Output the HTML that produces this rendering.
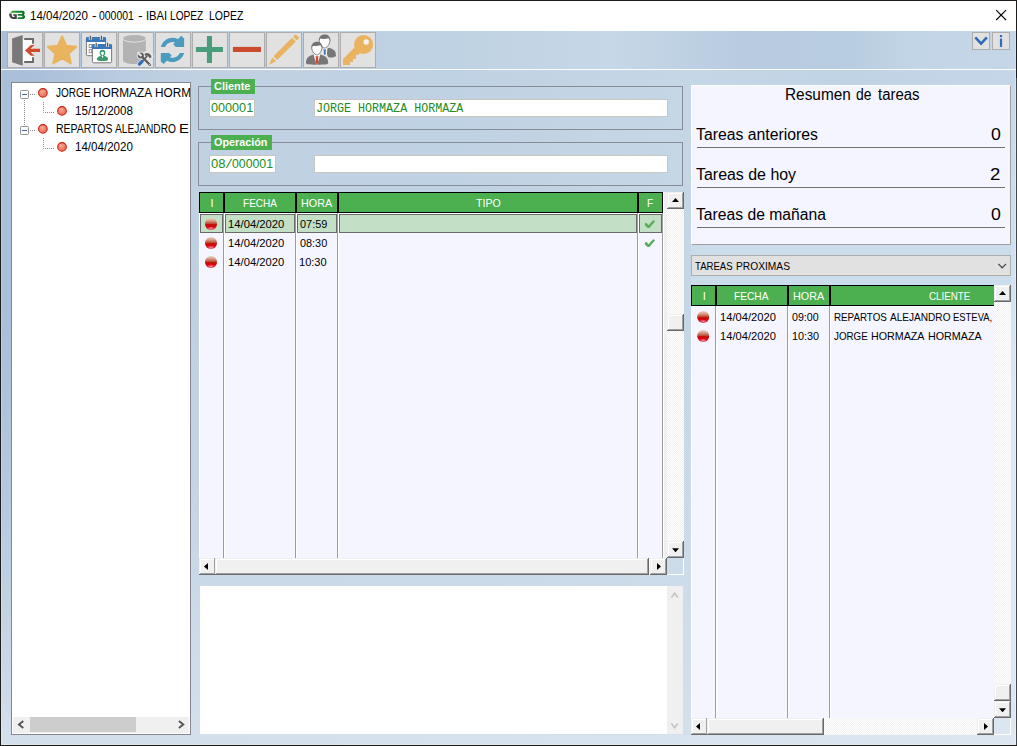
<!DOCTYPE html>
<html lang="es"><head><meta charset="utf-8"><title>14/04/2020 - 000001 - IBAI LOPEZ LOPEZ</title>
<style>
html,body{margin:0;padding:0}
body{width:1017px;height:746px;overflow:hidden;background:#1e1c18;position:relative;font-family:"Liberation Sans",sans-serif;font-size:11px}
div,span,svg{position:absolute;box-sizing:border-box}
.t{white-space:pre;transform-origin:0 0;display:block}
#bg{left:1px;top:1px;width:1015px;height:744px;
 background:
  linear-gradient(to bottom,rgba(212,225,237,0) 0,rgba(212,225,237,0) 300px,rgba(212,225,237,.1) 385px,rgba(212,225,237,.29) 500px,rgba(212,225,237,.62) 620px,rgba(212,225,237,.82) 695px,rgba(212,225,237,1) 744px),
  linear-gradient(to right,#a9bed9 0,#abc0da 40px,#b9cce0 120px,#c0d1e2 200px,#bfd2e3 450px,#c3d4e4 570px,#c5d7e6 690px,#c0d3e5 850px,#c5d6e8 1015px);}
#tbbg{left:1px;top:31px;width:1015px;height:38px;background:linear-gradient(to right,#a9bed9 0,#abc0da 40px,#b9cce0 120px,#bdd0e2 200px,#bfd2e3 450px,#c6d8e7 610px,#b8cbe0 740px,#b9cde1 850px,#c2d5e6 910px,#c5d6e8 1015px)}
#rgap{left:691px;top:245px;width:320px;height:40px;background:#cbdcea}
#bstrip{left:1px;top:735px;width:1015px;height:10px;background:linear-gradient(to right,#d3e0ec 0,#d3e0ec 200px,#dce6f1 100%)}
#bgedge{left:1px;top:31px;width:1015px;height:714px;border:1px solid rgba(255,255,255,.22);border-top:none}
#rstrip{left:1011px;top:70px;width:5px;height:675px;background:linear-gradient(to bottom,#c5d6e8 0,#dde7f2 330px,#dde7f2 100%)}
#rstrip2{left:1015px;top:70px;width:1px;height:675px;background:rgba(255,255,255,.35)}
#title{left:1px;top:1px;width:1015px;height:30px;background:#fff}
#tbline{left:1px;top:69px;width:1015px;height:1px;background:#fff}
.tb{width:36px;height:36px;top:32px;background:#e1e1e1;border:1px solid #adadad}
.sb{width:18px;height:18px;top:32px;background:#e1e1e1;border:1px solid #adadad}
#tree{left:11px;top:82px;width:180px;height:653px;background:#fff;border:1px solid #828790;overflow:hidden}
.fs{left:198px;width:485px;height:44px;border:1px solid #868c98}
.lg{background:#4caf50;height:15px;left:211px}
.in{background:#fff;border:1px solid #c9c6c0;height:18px}
.lav{background:#f5f5ff}
.hd{background:#4caf50;border:1px solid #000;height:21px}
.cl{width:1px;background:#9c9c9c}
.cw{width:1px;background:#fff}
.sel{background:#c3dfc5;border:1px solid #6a6a6a;height:19px;top:214px}
.b3{background:#f0f0f0;box-shadow:inset -1px -1px 0 #696969,inset 1px 1px 0 #f0f0f0,inset -2px -2px 0 #a0a0a0,inset 2px 2px 0 #fff}
.trk{background:repeating-conic-gradient(#ffffff 0 25%,#f0f0f0 0 50%) 0 0/2px 2px}
#ov{left:0;top:0;width:1017px;height:746px;pointer-events:none}
</style></head><body>
<div id="bg"></div><div id="tbbg"></div><div id="rgap"></div><div id="bstrip"></div><div id="bgedge"></div><div id="rstrip"></div><div id="rstrip2"></div>
<div style="left:1016px;top:78px;width:1px;height:667px;background:#464646"></div><div id="title"></div><div id="tbline"></div>

<span class="t" style="left:29.83px;top:9.64px;font-size:12px;line-height:12px;font-family:'Liberation Sans',sans-serif;color:#000;transform:scaleX(0.9624);">14/04/2020</span>
<span class="t" style="left:91.62px;top:9.64px;font-size:12px;line-height:12px;font-family:'Liberation Sans',sans-serif;color:#000;transform:scaleX(1.1448);">-</span>
<span class="t" style="left:99.31px;top:9.64px;font-size:12px;line-height:12px;font-family:'Liberation Sans',sans-serif;color:#000;transform:scaleX(0.8692);">000001</span>
<span class="t" style="left:138.22px;top:9.64px;font-size:12px;line-height:12px;font-family:'Liberation Sans',sans-serif;color:#000;transform:scaleX(1.1448);">-</span>
<span class="t" style="left:146.19px;top:9.64px;font-size:12px;line-height:12px;font-family:'Liberation Sans',sans-serif;color:#000;transform:scaleX(0.9357);">IBAI</span>
<span class="t" style="left:170.09px;top:9.64px;font-size:12px;line-height:12px;font-family:'Liberation Sans',sans-serif;color:#000;transform:scaleX(0.8445);">LOPEZ</span>
<span class="t" style="left:208.56px;top:9.64px;font-size:12px;line-height:12px;font-family:'Liberation Sans',sans-serif;color:#000;transform:scaleX(0.8735);">LOPEZ</span>
<div class="tb" style="left:7px"></div>
<div class="tb" style="left:44px"></div>
<div class="tb" style="left:81px"></div>
<div class="tb" style="left:118px"></div>
<div class="tb" style="left:155px"></div>
<div class="tb" style="left:192px"></div>
<div class="tb" style="left:229px"></div>
<div class="tb" style="left:266px"></div>
<div class="tb" style="left:303px"></div>
<div class="tb" style="left:340px"></div>
<div class="sb" style="left:972px"></div><div class="sb" style="left:992px"></div>
<div id="tree"><div style="left:0;top:0;width:177.5px;height:200px;overflow:hidden">
<span class="t" style="left:43.75px;top:3.64px;font-size:12px;line-height:12px;font-family:'Liberation Sans',sans-serif;color:#000;transform:scaleX(0.8315);">JORGE</span>
<span class="t" style="left:80.65px;top:3.64px;font-size:12px;line-height:12px;font-family:'Liberation Sans',sans-serif;color:#000;transform:scaleX(0.9846);">HORMAZA</span>
<span class="t" style="left:142.55px;top:3.64px;font-size:12px;line-height:12px;font-family:'Liberation Sans',sans-serif;color:#000;transform:scaleX(0.9846);">HORMAZA</span>
<span class="t" style="left:63.33px;top:21.74px;font-size:12px;line-height:12px;font-family:'Liberation Sans',sans-serif;color:#000;transform:scaleX(0.9646);">15/12/2008</span>
<span class="t" style="left:43.96px;top:39.54px;font-size:12px;line-height:12px;font-family:'Liberation Sans',sans-serif;color:#000;transform:scaleX(0.8717);">REPARTOS</span>
<span class="t" style="left:103.40px;top:39.54px;font-size:12px;line-height:12px;font-family:'Liberation Sans',sans-serif;color:#000;transform:scaleX(0.8456);">ALEJANDRO</span>
<span class="t" style="left:166.81px;top:39.54px;font-size:12px;line-height:12px;font-family:'Liberation Sans',sans-serif;color:#000;transform:scaleX(1.2385);">ESTEVA,</span>
<span class="t" style="left:63.33px;top:57.64px;font-size:12px;line-height:12px;font-family:'Liberation Sans',sans-serif;color:#000;transform:scaleX(0.9641);">14/04/2020</span>
</div>
<div style="left:1px;top:634px;width:176px;height:16px;background:#f0f0f0"></div>
<div style="left:18px;top:634px;width:106px;height:15px;background:#cdcdcd"></div>
</div>
<div class="fs" style="top:86px"></div><div class="fs" style="top:142px"></div>
<div class="lg" style="top:79px;width:44px"></div><div class="lg" style="top:135px;width:61px"></div>
<span class="t" style="left:213.96px;top:81.19px;font-size:11px;line-height:11px;font-family:'Liberation Sans',sans-serif;font-weight:bold;color:#fff;transform:scaleX(0.9927);">Cliente</span>
<span class="t" style="left:213.97px;top:137.09px;font-size:11px;line-height:11px;font-family:'Liberation Sans',sans-serif;font-weight:bold;color:#fff;transform:scaleX(0.9813);">Operación</span>
<div class="in" style="left:209px;top:99px;width:46px"></div>
<div class="in" style="left:314px;top:99px;width:354px"></div>
<div class="in" style="left:209px;top:155px;width:67px"></div>
<div class="in" style="left:314px;top:155px;width:354px"></div>
<span class="t" style="left:210.73px;top:100.56px;font-size:13.4px;line-height:13.4px;font-family:'Liberation Sans',sans-serif;color:#228b22;transform:scaleX(0.9437);">000001</span>
<span class="t" style="left:315.71px;top:101.98px;font-size:13.6px;line-height:13.6px;font-family:'Liberation Mono',monospace;color:#228b22;transform:scaleX(0.8594);">JORGE HORMAZA HORMAZA</span>
<span class="t" style="left:210.81px;top:156.56px;font-size:13.4px;line-height:13.4px;font-family:'Liberation Sans',sans-serif;color:#228b22;transform:scaleX(0.9758);">08</span>
<span class="t" style="left:224.59px;top:157.98px;font-size:13.6px;line-height:13.6px;font-family:'Liberation Mono',monospace;color:#228b22;transform:scaleX(0.9454);">/</span>
<span class="t" style="left:232.34px;top:156.56px;font-size:13.4px;line-height:13.4px;font-family:'Liberation Sans',sans-serif;color:#228b22;transform:scaleX(0.9185);">000001</span>
<div class="lav" style="left:199px;top:192px;width:468px;height:366px"></div>
<div class="cw" style="left:199px;top:213px;height:345px"></div>
<div style="left:199px;top:213px;width:464px;height:1px;background:#fff"></div>
<div class="hd" style="left:199px;top:192px;width:25px"></div>
<div class="cl" style="left:223px;top:213px;height:345px"></div>
<div class="cw" style="left:224px;top:213px;height:345px"></div>
<div class="sel" style="left:200px;width:23px"></div>
<div class="hd" style="left:224px;top:192px;width:72px"></div>
<div class="cl" style="left:295px;top:213px;height:345px"></div>
<div class="cw" style="left:296px;top:213px;height:345px"></div>
<div class="sel" style="left:225px;width:70px"></div>
<div class="hd" style="left:296px;top:192px;width:42px"></div>
<div class="cl" style="left:337px;top:213px;height:345px"></div>
<div class="cw" style="left:338px;top:213px;height:345px"></div>
<div class="sel" style="left:297px;width:40px"></div>
<div class="hd" style="left:338px;top:192px;width:300px"></div>
<div class="cl" style="left:637px;top:213px;height:345px"></div>
<div class="cw" style="left:638px;top:213px;height:345px"></div>
<div class="sel" style="left:339px;width:298px"></div>
<div class="hd" style="left:638px;top:192px;width:25px"></div>
<div class="cl" style="left:662px;top:213px;height:345px"></div>
<div class="sel" style="left:639px;width:23px"></div>
<div style="left:663px;top:192px;width:4px;height:366px;background:#f0f0f0;border-left:1px solid #fff"></div>
<span class="t" style="left:-0.99px;top:197.79px;font-size:11px;line-height:11px;font-family:'Liberation Sans',sans-serif;color:#fff;transform:scaleX(1.0000);left:210.6px;">I</span>
<span class="t" style="left:242.90px;top:197.79px;font-size:11px;line-height:11px;font-family:'Liberation Sans',sans-serif;color:#fff;transform:scaleX(0.9125);">FECHA</span>
<span class="t" style="left:300.63px;top:197.79px;font-size:11px;line-height:11px;font-family:'Liberation Sans',sans-serif;color:#fff;transform:scaleX(0.9844);">HORA</span>
<span class="t" style="left:475.79px;top:197.79px;font-size:11px;line-height:11px;font-family:'Liberation Sans',sans-serif;color:#fff;transform:scaleX(0.9633);">TIPO</span>
<span class="t" style="left:647.19px;top:197.79px;font-size:11px;line-height:11px;font-family:'Liberation Sans',sans-serif;color:#fff;transform:scaleX(0.9229);">F</span>
<span class="t" style="left:228.06px;top:218.69px;font-size:11px;line-height:11px;font-family:'Liberation Sans',sans-serif;color:#000;transform:scaleX(1.0220);">14/04/2020</span>
<span class="t" style="left:299.79px;top:218.69px;font-size:11px;line-height:11px;font-family:'Liberation Sans',sans-serif;color:#000;transform:scaleX(0.9917);">07:59</span>
<span class="t" style="left:228.06px;top:237.69px;font-size:11px;line-height:11px;font-family:'Liberation Sans',sans-serif;color:#000;transform:scaleX(1.0220);">14/04/2020</span>
<span class="t" style="left:299.79px;top:237.69px;font-size:11px;line-height:11px;font-family:'Liberation Sans',sans-serif;color:#000;transform:scaleX(0.9887);">08:30</span>
<span class="t" style="left:228.06px;top:256.69px;font-size:11px;line-height:11px;font-family:'Liberation Sans',sans-serif;color:#000;transform:scaleX(1.0220);">14/04/2020</span>
<span class="t" style="left:299.37px;top:256.69px;font-size:11px;line-height:11px;font-family:'Liberation Sans',sans-serif;color:#000;transform:scaleX(1.0042);">10:30</span>
<div class="trk" style="left:667px;top:192px;width:17px;height:366px"></div>
<div class="b3" style="left:667px;top:192px;width:17px;height:17px"></div>
<div class="b3" style="left:667px;top:314px;width:17px;height:17px"></div>
<div class="b3" style="left:667px;top:541px;width:17px;height:17px"></div>
<div class="trk" style="left:199px;top:558px;width:468px;height:17px"></div>
<div style="left:199px;top:558px;width:16px;height:17px;overflow:hidden"><div class="b3" style="left:0;top:0;width:17px;height:17px"></div><div style="left:15px;top:0;width:1px;height:15px;background:#a0a0a0"></div></div>
<div class="b3" style="left:215px;top:558px;width:434px;height:17px"></div>
<div class="b3" style="left:650px;top:558px;width:17px;height:17px"></div>
<div style="left:667px;top:558px;width:17px;height:17px;border-right:1px solid #fff;border-bottom:1px solid #fff"></div>
<div style="left:200px;top:586px;width:467px;height:148px;background:#fff"></div>
<div style="left:667px;top:586px;width:16px;height:148px;background:#f0f0f0"></div>
<div class="lav" style="left:691px;top:85px;width:320px;height:160px;border-left:1px solid #fff;border-top:1px solid #fff;border-right:1px solid #a0a0a0;border-bottom:1px solid #a0a0a0"></div>
<span class="t" style="left:785.07px;top:86.83px;font-size:15.8px;line-height:15.8px;font-family:'Liberation Sans',sans-serif;color:#000;transform:scaleX(0.9735);">Resumen</span>
<span class="t" style="left:856.44px;top:86.83px;font-size:15.8px;line-height:15.8px;font-family:'Liberation Sans',sans-serif;color:#000;transform:scaleX(0.8808);">de</span>
<span class="t" style="left:878.18px;top:86.83px;font-size:15.8px;line-height:15.8px;font-family:'Liberation Sans',sans-serif;color:#000;transform:scaleX(0.9459);">tareas</span>
<span class="t" style="left:695.88px;top:126.79px;font-size:15.6px;line-height:15.6px;font-family:'Liberation Sans',sans-serif;color:#000;transform:scaleX(1.0126);">Tareas anteriores</span>
<span class="t" style="left:990.64px;top:127.49px;font-size:15.6px;line-height:15.6px;font-family:'Liberation Sans',sans-serif;color:#000;transform:scaleX(1.1351);">0</span>
<div style="left:697px;top:147px;width:308px;height:1px;background:#6e6e6e"></div>
<div style="left:1005px;top:147px;width:5px;height:1px;background:#fff"></div>
<span class="t" style="left:695.88px;top:166.79px;font-size:15.6px;line-height:15.6px;font-family:'Liberation Sans',sans-serif;color:#000;transform:scaleX(1.0215);">Tareas de hoy</span>
<span class="t" style="left:990.37px;top:167.49px;font-size:15.6px;line-height:15.6px;font-family:'Liberation Sans',sans-serif;color:#000;transform:scaleX(1.1910);">2</span>
<div style="left:697px;top:187px;width:308px;height:1px;background:#6e6e6e"></div>
<div style="left:1005px;top:187px;width:5px;height:1px;background:#fff"></div>
<span class="t" style="left:695.89px;top:206.79px;font-size:15.6px;line-height:15.6px;font-family:'Liberation Sans',sans-serif;color:#000;transform:scaleX(1.0059);">Tareas de mañana</span>
<span class="t" style="left:990.64px;top:207.49px;font-size:15.6px;line-height:15.6px;font-family:'Liberation Sans',sans-serif;color:#000;transform:scaleX(1.1351);">0</span>
<div style="left:697px;top:227px;width:308px;height:1px;background:#6e6e6e"></div>
<div style="left:1005px;top:227px;width:5px;height:1px;background:#fff"></div>
<div style="left:691px;top:255px;width:320px;height:21px;background:#e1e1e1;border:1px solid #adadad"></div>
<span class="t" style="left:695.01px;top:261.23px;font-size:11.3px;line-height:11.3px;font-family:'Liberation Sans',sans-serif;color:#000;transform:scaleX(0.8477);">TAREAS</span>
<span class="t" style="left:736.08px;top:261.23px;font-size:11.3px;line-height:11.3px;font-family:'Liberation Sans',sans-serif;color:#000;transform:scaleX(0.9047);">PROXIMAS</span>
<div class="lav" style="left:691px;top:285px;width:303px;height:433px"></div>
<div class="cw" style="left:691px;top:306px;height:412px"></div>
<div style="left:691px;top:306px;width:303px;height:1px;background:#fff"></div>
<div style="left:691px;top:285px;width:303px;height:21px;overflow:hidden">
<div class="hd" style="left:0px;top:0;width:25px"></div>
<div class="hd" style="left:25px;top:0;width:72px"></div>
<div class="hd" style="left:97px;top:0;width:42px"></div>
<div class="hd" style="left:139px;top:0;width:200px"></div>
</div>
<div class="cl" style="left:715px;top:306px;height:412px"></div>
<div class="cw" style="left:716px;top:306px;height:412px"></div>
<div class="cl" style="left:787px;top:306px;height:412px"></div>
<div class="cw" style="left:788px;top:306px;height:412px"></div>
<div class="cl" style="left:829px;top:306px;height:412px"></div>
<div class="cw" style="left:830px;top:306px;height:412px"></div>
<span class="t" style="left:-0.99px;top:290.69px;font-size:11px;line-height:11px;font-family:'Liberation Sans',sans-serif;color:#fff;transform:scaleX(1.0000);left:702.8px;">I</span>
<span class="t" style="left:734.49px;top:290.69px;font-size:11px;line-height:11px;font-family:'Liberation Sans',sans-serif;color:#fff;transform:scaleX(0.9235);">FECHA</span>
<span class="t" style="left:792.74px;top:290.69px;font-size:11px;line-height:11px;font-family:'Liberation Sans',sans-serif;color:#fff;transform:scaleX(0.9811);">HORA</span>
<span class="t" style="left:929.11px;top:290.69px;font-size:11px;line-height:11px;font-family:'Liberation Sans',sans-serif;color:#fff;transform:scaleX(0.8865);">CLIENTE</span>
<span class="t" style="left:720.36px;top:311.69px;font-size:11px;line-height:11px;font-family:'Liberation Sans',sans-serif;color:#000;transform:scaleX(1.0164);">14/04/2020</span>
<span class="t" style="left:792.40px;top:311.69px;font-size:11px;line-height:11px;font-family:'Liberation Sans',sans-serif;color:#000;transform:scaleX(0.9699);">09:00</span>
<span class="t" style="left:833.52px;top:311.69px;font-size:11px;line-height:11px;font-family:'Liberation Sans',sans-serif;color:#000;transform:scaleX(0.8905);">REPARTOS</span>
<span class="t" style="left:889.50px;top:311.69px;font-size:11px;line-height:11px;font-family:'Liberation Sans',sans-serif;color:#000;transform:scaleX(0.9163);">ALEJANDRO</span>
<span class="t" style="left:953.24px;top:311.69px;font-size:11px;line-height:11px;font-family:'Liberation Sans',sans-serif;color:#000;transform:scaleX(0.8583);">ESTEVA,</span>
<span class="t" style="left:720.36px;top:330.69px;font-size:11px;line-height:11px;font-family:'Liberation Sans',sans-serif;color:#000;transform:scaleX(1.0164);">14/04/2020</span>
<span class="t" style="left:791.99px;top:330.69px;font-size:11px;line-height:11px;font-family:'Liberation Sans',sans-serif;color:#000;transform:scaleX(0.9852);">10:30</span>
<span class="t" style="left:834.45px;top:330.69px;font-size:11px;line-height:11px;font-family:'Liberation Sans',sans-serif;color:#000;transform:scaleX(0.8883);">JORGE</span>
<span class="t" style="left:870.94px;top:330.69px;font-size:11px;line-height:11px;font-family:'Liberation Sans',sans-serif;color:#000;transform:scaleX(0.9724);">HORMAZA</span>
<span class="t" style="left:928.34px;top:330.69px;font-size:11px;line-height:11px;font-family:'Liberation Sans',sans-serif;color:#000;transform:scaleX(0.9761);">HORMAZA</span>
<div class="trk" style="left:994px;top:285px;width:17px;height:433px"></div>
<div class="b3" style="left:994px;top:285px;width:17px;height:17px"></div>
<div class="b3" style="left:994px;top:684px;width:17px;height:17px"></div>
<div class="b3" style="left:994px;top:701px;width:17px;height:17px"></div>
<div class="trk" style="left:691px;top:718px;width:303px;height:17px"></div>
<div style="left:691px;top:718px;width:16px;height:17px;overflow:hidden"><div class="b3" style="left:0;top:0;width:17px;height:17px"></div><div style="left:15px;top:0;width:1px;height:15px;background:#a0a0a0"></div></div>
<div class="b3" style="left:707px;top:718px;width:117px;height:17px"></div>
<div class="b3" style="left:977px;top:718px;width:17px;height:17px"></div>
<div style="left:994px;top:718px;width:17px;height:17px;background:#dce6f1;border-right:1px solid #fff;border-bottom:1px solid #fff"></div>
<svg id="ov" viewBox="0 0 1017 746">
<defs><linearGradient id="lg3" x1="0" y1="0" x2="1" y2="0"><stop offset="0" stop-color="#43b02a"/><stop offset=".5" stop-color="#168a2c"/><stop offset="1" stop-color="#0b6b2a"/></linearGradient></defs><g><path d="M10.2,12.7 L12,10.7 H22.6 Q24.6,10.7 24.6,12.4 V13.6 Q24.6,14.6 23.8,14.9 Q25,15.2 25,16.2 V17.2 Q25,18.9 23,18.9 H17.7 V17.2 H22.4 V15.7 H17.7 V14.1 H22.2 V12.7 Z" fill="url(#lg3)"/><path d="M9,13.5 L11.5,13.4 Q11.8,16.9 13.4,17.1 H14.5 V15.7 H13.2 V14.2 H16.8 V18.9 H12.6 Q9.3,18.4 9,13.5 Z" fill="#404040"/></g>
<path d="M996.2,10.2 L1006,20 M1006,10.2 L996.2,20" stroke="#000" stroke-width="1.1" fill="none"/>
<path d="M975.3,37.4 L981.1,43.6 L986.9,37.4" stroke="#2f6bb8" stroke-width="2.6" fill="none" stroke-linejoin="miter"/>
<rect x="999.9" y="35" width="2.2" height="2.2" fill="#2f6bb8"/><rect x="999.9" y="38.6" width="2.2" height="8.3" fill="#2f6bb8"/>
<g><rect x="22.6" y="38.8" width="10.2" height="23.4" fill="#fafafa"/><path d="M12.1,38.6 L22.7,35.1 L22.7,65.7 L12.1,62.2 Z" fill="#787878"/><path d="M24.2,39 H33 V43.7 M33,57.2 V62 H24.2" stroke="#6a6a6a" stroke-width="1.9" fill="none"/><path d="M25,50.4 L30.9,45 L34.5,45 L30.6,48.8 L40.1,48.8 L40.1,52 L30.6,52 L34.5,55.8 L30.9,55.8 Z" fill="#d04a2b"/></g>
<polygon points="62.05,36.30 66.16,45.64 76.32,46.66 68.71,53.46 70.87,63.44 62.05,58.30 53.23,63.44 55.39,53.46 47.78,46.66 57.94,45.64" fill="#e9b35f" stroke="#e9b35f" stroke-width="2" stroke-linejoin="round"/>
<g><rect x="86.4" y="37.8" width="19.2" height="17.9" rx="1.3" fill="#fff" stroke="#6b6b6b" stroke-width="0.9"/><path d="M86.0,42.0 V38.199999999999996 Q86.0,37.0 87.4,37.0 H104.60000000000001 Q106.00000000000001,37.0 106.00000000000001,38.199999999999996 V42.0 Z" fill="#3b78b8"/><rect x="88.8" y="36.4" width="3" height="3.3" fill="#e3e5e8"/><rect x="89.75" y="35.699999999999996" width="1.1" height="3.9" fill="#4a4a4a"/><rect x="99.9" y="36.4" width="3" height="3.3" fill="#e3e5e8"/><rect x="100.85000000000001" y="35.699999999999996" width="1.1" height="3.9" fill="#4a4a4a"/></g>
<rect x="89.2" y="44.5" width="2.6" height="3.1" fill="#fff" stroke="#8c8c8c" stroke-width="0.9"/><rect x="89.2" y="49.6" width="2.6" height="3.1" fill="#fff" stroke="#8c8c8c" stroke-width="0.9"/>
<g><rect x="92.4" y="44.9" width="19.2" height="17.9" rx="1.3" fill="#fff" stroke="#6b6b6b" stroke-width="0.9"/><path d="M92.0,49.1 V45.3 Q92.0,44.1 93.4,44.1 H110.60000000000001 Q112.00000000000001,44.1 112.00000000000001,45.3 V49.1 Z" fill="#3b78b8"/><rect x="94.7" y="43.5" width="3" height="3.3" fill="#e3e5e8"/><rect x="95.65" y="42.8" width="1.1" height="3.9" fill="#4a4a4a"/><rect x="106.1" y="43.5" width="3" height="3.3" fill="#e3e5e8"/><rect x="107.05" y="42.8" width="1.1" height="3.9" fill="#4a4a4a"/></g>
<g fill="#3a9b6e"><ellipse cx="102.5" cy="52.9" rx="2.85" ry="3.1"/><path d="M96.9,59.4 C96.9,57 99.5,55.8 102.5,55.8 C105.5,55.8 108.1,57 108.1,59.4 C108.1,60.6 105.6,61 102.5,61 C99.4,61 96.9,60.6 96.9,59.4 Z"/></g><path d="M101,52.2 Q102.5,51.2 104,52.2 Q104,54.2 102.5,55.7 Q101,54.2 101,52.2 Z" fill="#fff"/><path d="M101.5,56 L102.5,58.3 L103.5,56 Z" fill="#fff" opacity=".9"/>
<g><path d="M123,38.4 V60.4 C123,62.4 128,63.9 134.4,63.9 C140.8,63.9 145.8,62.4 145.8,60.4 V38.4 Z" fill="#b3b3b3"/><ellipse cx="134.4" cy="38.4" rx="11.4" ry="3.4" fill="#b3b3b3"/><path d="M123,38.6 C123,40.6 128,42.1 134.4,42.1 C140.8,42.1 145.8,40.6 145.8,38.6" fill="none" stroke="#e4e4e4" stroke-width="1"/><path d="M142.3,57 L150,65 M147.2,56 L139.2,64.3" stroke="#e8e8e8" stroke-width="4.6" stroke-linecap="round" fill="none"/><circle cx="140.8" cy="55.4" r="3.9" fill="#e8e8e8"/><path d="M144.6,54.4 Q147.8,51.6 151.2,56.4" stroke="#e8e8e8" stroke-width="4.6" stroke-linecap="round" fill="none"/><circle cx="140.8" cy="55.5" r="2.1" fill="none" stroke="#5e5e5e" stroke-width="1.9"/><path d="M140.4,55.1 L137.6,52.3" stroke="#e2e2e2" stroke-width="2.2" fill="none"/><path d="M142.3,57 L150,65" stroke="#5e5e5e" stroke-width="2.4" stroke-linecap="round" fill="none"/><circle cx="149.7" cy="64.7" r="0.6" fill="#f4f4f4"/><path d="M147.2,56 L142.4,61" stroke="#5e5e5e" stroke-width="1.8" fill="none"/><path d="M142.0,61.5 L139.4,64.1" stroke="#2f6fbd" stroke-width="3.3" stroke-linecap="round" fill="none"/><path d="M144.4,54.3 Q147.6,51.2 151,55.2 L151.5,56.9 L149.9,58.2 L148.6,56.8 Q147.4,54.9 145.6,56 Z" fill="#5e5e5e"/></g>
<g transform="rotate(0 172.45 49.9)"><path d="M160.8,46.9 A12.1,12.1 0 0 1 180.6,40.9 L177.8,44 A8,8 0 0 0 165.1,46.9 Z" fill="#4b9bbf"/><path d="M181.2,35.7 L184.1,38.4 L184.1,46.9 L175.8,46.9 L173.2,44.2 Z" fill="#4b9bbf"/></g>
<g transform="rotate(180 172.45 49.9)"><path d="M160.8,46.9 A12.1,12.1 0 0 1 180.6,40.9 L177.8,44 A8,8 0 0 0 165.1,46.9 Z" fill="#4b9bbf"/><path d="M181.2,35.7 L184.1,38.4 L184.1,46.9 L175.8,46.9 L173.2,44.2 Z" fill="#4b9bbf"/></g>
<path d="M195.9,46.9 H206.9 V35.9 H212 V46.9 H223 V52 H212 V63 H206.9 V52 H195.9 Z" fill="#4a9d7a"/>
<rect x="232.9" y="46.9" width="28.1" height="5.1" fill="#cc4b30"/>
<g transform="translate(269,64.9) rotate(-45)" fill="#e9b35f"><path d="M0,-0.2 L7.7,-2.9 L7.7,2.4 Z"/><rect x="9.3" y="-2.9" width="26.2" height="5.3"/><path d="M37,-2.9 H39.4 Q40.6,-2.9 40.6,-1.7 V1.2 Q40.6,2.4 39.4,2.4 H37 Z"/></g>
<g><path d="M327.6,47.7 C331.6,48.2 335.2,50 335.7,53.2 L336,56 C334.2,57.6 330.6,57.9 328.4,57.3 C326.8,55.4 326.6,52 327.6,47.7 Z" fill="#777"/><path d="M322,48.8 L324.6,47.8 L327.4,48.2 L326.6,55.4 L322.6,55.4 Z" fill="#f0f0f0"/><path d="M323.1,49.4 H326.3 L325.6,51.1 L325.8,54.3 L324.7,55 L323.7,54.3 L323.9,51.1 Z" fill="#3b78b8"/><path d="M319.1,40.4 C319.1,34.199999999999996 330.1,34.199999999999996 330.1,40.4 C330.1,44.0 326.6,48.0 324.6,48.0 C322.6,48.0 319.1,44.0 319.1,40.4 Z" fill="#fdfdfd" stroke="#727272" stroke-width="0.9"/><path d="M319.20000000000005,41.199999999999996 C318.6,35.8 322.0,34.5 324.8,34.5 C327.8,34.5 330.6,36.199999999999996 330.0,41.4 C329.6,39.6 328.90000000000003,38.6 328.5,38.199999999999996 C325.6,39.199999999999996 322.0,39.199999999999996 320.3,38.6 C319.70000000000005,39.4 319.40000000000003,40.199999999999996 319.20000000000005,41.199999999999996 Z" fill="#727272"/><path d="M306,62.6 C306,57.6 309.6,55.8 313.6,54.6 L317,56.4 L320.4,54.6 C324.6,55.8 328.2,57.6 328.2,62.6 C328.2,63.6 327.6,64 326.8,64.2 C322,64.8 312,64.8 307.4,64.2 C306.6,64 306,63.6 306,62.6 Z" fill="#777"/><path d="M313.6,54.8 L317,54.2 L320.2,54.8 L317.5,64.5 L316.4,64.5 Z" fill="#fbfbfb"/><path d="M315.3,56.2 H318.7 L318,58 L318.5,62.6 L317,64.5 L315.5,62.6 L316,58 Z" fill="#d64530"/><path d="M311.65000000000003,47.5 C311.65000000000003,41.5 322.05,41.5 322.05,47.5 C322.05,51.1 318.85,54.9 316.85,54.9 C314.85,54.9 311.65000000000003,51.1 311.65000000000003,47.5 Z" fill="#fdfdfd" stroke="#727272" stroke-width="0.9"/><path d="M311.75000000000006,48.3 C311.15000000000003,43.1 314.25,41.800000000000004 317.05,41.800000000000004 C320.05,41.800000000000004 322.55,43.5 321.95,48.5 C321.55,46.7 320.85,45.7 320.45,45.3 C317.85,46.3 314.25,46.3 312.85,45.7 C312.25000000000006,46.5 311.95000000000005,47.3 311.75000000000006,48.3 Z" fill="#727272"/></g>
<g fill="#e9b35f"><circle cx="363.6" cy="44.5" r="9.5"/><path d="M343,64.9 V59 L355.5,46.5 L362,53 L359,53.6 V54.8 H356 V59 H353 V61.9 H350.1 V64.9 Z"/><circle cx="366.2" cy="42" r="2.7" fill="#f4f4f4"/></g>
<defs><radialGradient id="tg" cx=".4" cy=".35" r=".7"><stop offset="0" stop-color="#f7a996"/><stop offset="1" stop-color="#e9654f"/></radialGradient><linearGradient id="rb" x1="0" y1="0" x2="0" y2="1"><stop offset="0" stop-color="#e6d2c4"/><stop offset=".22" stop-color="#dba08c"/><stop offset=".47" stop-color="#b94e3a"/><stop offset=".5" stop-color="#bd1808"/><stop offset=".72" stop-color="#df0008"/><stop offset=".9" stop-color="#f2405e"/><stop offset="1" stop-color="#ff88a8"/></linearGradient><radialGradient id="rbe" cx=".5" cy=".35" r=".68"><stop offset=".62" stop-color="#7a2000" stop-opacity="0"/><stop offset="1" stop-color="#7a2000" stop-opacity=".45"/></radialGradient><radialGradient id="rbp" cx=".5" cy=".5" r=".5"><stop offset="0" stop-color="#ff8fb0" stop-opacity=".95"/><stop offset="1" stop-color="#ff6088" stop-opacity="0"/></radialGradient></defs>
<rect x="20.5" y="90.5" width="8" height="8" rx="1" fill="#fbfbfb" stroke="#919191" stroke-width="1"/><rect x="22" y="94" width="5" height="1" fill="#4b63a7"/>
<rect x="20.5" y="126.5" width="8" height="8" rx="1" fill="#fbfbfb" stroke="#919191" stroke-width="1"/><rect x="22" y="130" width="5" height="1" fill="#4b63a7"/>
<g stroke="#8a8a8a" stroke-width="1" stroke-dasharray="1 1" fill="none"><path d="M30,94.5 H36"/><path d="M30,130.5 H36"/><path d="M24.5,100 V126"/><path d="M43.5,102 V112.5 H54"/><path d="M43.5,138 V148.5 H54"/></g>
<circle cx="42.9" cy="92.9" r="4.3" fill="url(#tg)" stroke="#c8200a" stroke-width="1.1"/>
<circle cx="62" cy="110.9" r="4.3" fill="url(#tg)" stroke="#c8200a" stroke-width="1.1"/>
<circle cx="42.9" cy="128.9" r="4.3" fill="url(#tg)" stroke="#c8200a" stroke-width="1.1"/>
<circle cx="62" cy="146.9" r="4.3" fill="url(#tg)" stroke="#c8200a" stroke-width="1.1"/>
<path d="M23.3,721 L18.9,724.5 L23.3,728" stroke="#555" stroke-width="1.9" fill="none"/>
<path d="M178.9,721 L183.3,724.5 L178.9,728" stroke="#555" stroke-width="1.9" fill="none"/>
<circle cx="211" cy="224" r="6" fill="url(#rb)"/><circle cx="211" cy="224" r="6" fill="url(#rbe)"/><ellipse cx="211" cy="228.3" rx="3.6" ry="2" fill="url(#rbp)"/>
<circle cx="211" cy="243" r="6" fill="url(#rb)"/><circle cx="211" cy="243" r="6" fill="url(#rbe)"/><ellipse cx="211" cy="247.3" rx="3.6" ry="2" fill="url(#rbp)"/>
<circle cx="211" cy="262" r="6" fill="url(#rb)"/><circle cx="211" cy="262" r="6" fill="url(#rbe)"/><ellipse cx="211" cy="266.3" rx="3.6" ry="2" fill="url(#rbp)"/>
<circle cx="703.2" cy="317" r="6" fill="url(#rb)"/><circle cx="703.2" cy="317" r="6" fill="url(#rbe)"/><ellipse cx="703.2" cy="321.3" rx="3.6" ry="2" fill="url(#rbp)"/>
<circle cx="703.2" cy="336" r="6" fill="url(#rb)"/><circle cx="703.2" cy="336" r="6" fill="url(#rbe)"/><ellipse cx="703.2" cy="340.3" rx="3.6" ry="2" fill="url(#rbp)"/>
<polygon points="644.9,223.2 646.6,223.0 648.5,225.2 653.4,219.9 655.0,221.5 649.4,228.0 647.6,228.0 644.9,225.4" fill="#5aad5a"/>
<polygon points="644.9,242.2 646.6,242.0 648.5,244.2 653.4,238.9 655.0,240.5 649.4,247.0 647.6,247.0 644.9,244.4" fill="#5aad5a"/>
<path d="M672.0,202 L675.5,198 L679.0,202 Z" fill="#000"/>
<path d="M672.0,548.2 L675.5,552.2 L679.0,548.2 Z" fill="#000"/>
<path d="M208,563.0 L204,566.5 L208,570.0 Z" fill="#000"/>
<path d="M657,563.0 L661,566.5 L657,570.0 Z" fill="#000"/>
<path d="M999.0,295 L1002.5,291 L1006.0,295 Z" fill="#000"/>
<path d="M999.0,708.2 L1002.5,712.2 L1006.0,708.2 Z" fill="#000"/>
<path d="M700,723.0 L696,726.5 L700,730.0 Z" fill="#000"/>
<path d="M984,723.0 L988,726.5 L984,730.0 Z" fill="#000"/>
<path d="M671.4,597.4 L674.6,593.2 L677.8,597.4" stroke="#c2c2c2" stroke-width="1.6" fill="none"/>
<path d="M671.4,723.6 L674.6,727.8 L677.8,723.6" stroke="#c2c2c2" stroke-width="1.6" fill="none"/>
<path d="M998.4,264 L1002.2,267.8 L1006,264" stroke="#505050" stroke-width="1.25" fill="none"/>
</svg>
</body></html>
